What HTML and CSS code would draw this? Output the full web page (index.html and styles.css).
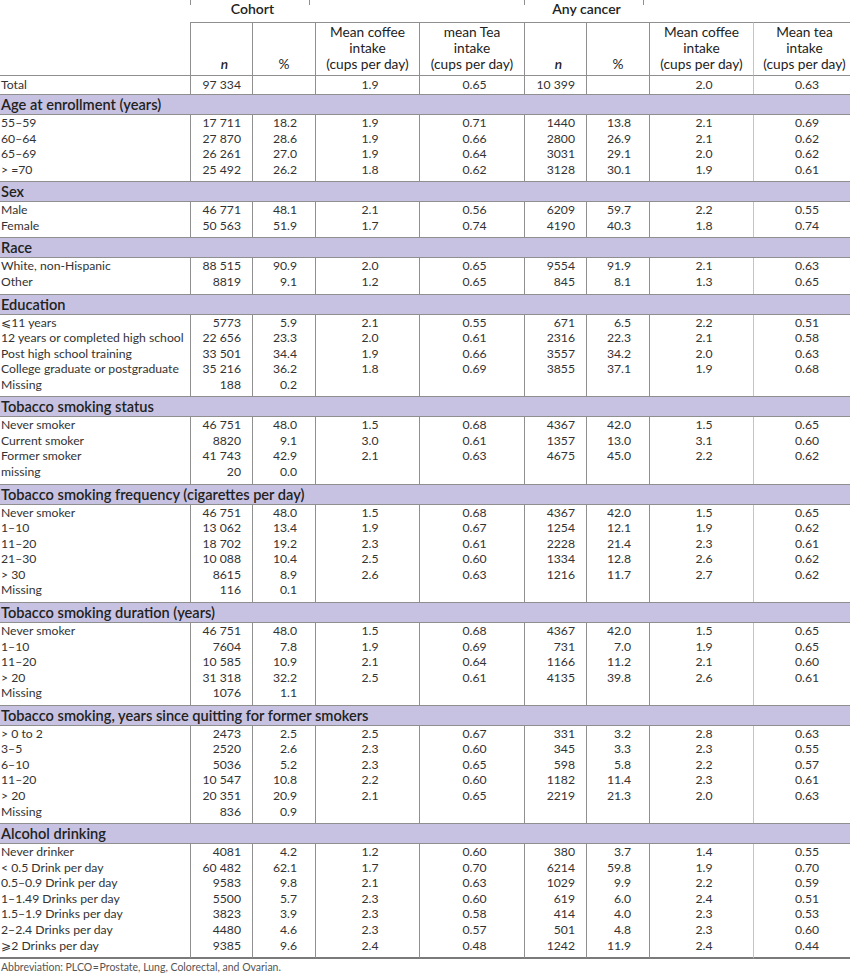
FILE: index.html
```html
<!DOCTYPE html>
<html>
<head>
<meta charset="utf-8">
<link rel="stylesheet" href="styles.css">
</head>
<body>
<table class="t">
<colgroup>
<col class="c-lab"><col class="c-n"><col class="c-p"><col class="c-m"><col class="c-m2"><col class="c-n"><col class="c-p"><col class="c-m"><col class="c-last">
</colgroup>
<tr class="grp">
<td></td><td colspan="2" class="g">Cohort</td><td colspan="2"></td><td colspan="2" class="g">Any cancer</td><td colspan="2"></td>
</tr>
<tr class="hd">
<td class="lab"></td><td class="v"><i>n</i></td><td class="v">%</td><td class="v">Mean coffee<br>intake<br>(cups per day)</td><td class="v">mean Tea<br>intake<br>(cups per day)</td><td class="v"><i>n</i></td><td class="v">%</td><td class="v">Mean coffee<br>intake<br>(cups per day)</td><td class="v lt">Mean tea<br>intake<br>(cups per day)</td>
</tr>
<tr class="tot">
<td class="lab">Total</td><td class="n">97&nbsp;334</td><td class="p"></td><td class="m">1.9</td><td class="m">0.65</td><td class="n">10&nbsp;399</td><td class="p"></td><td class="m">2.0</td><td class="m lt">0.63</td>
</tr>
<tr class="band"><td colspan="9">Age at enrollment (years)</td></tr>
<tr><td class="lab">55–59</td><td class="n">17&nbsp;711</td><td class="p">18.2</td><td class="m">1.9</td><td class="m">0.71</td><td class="n">1440</td><td class="p">13.8</td><td class="m">2.1</td><td class="m lt">0.69</td></tr>
<tr><td class="lab">60–64</td><td class="n">27&nbsp;870</td><td class="p">28.6</td><td class="m">1.9</td><td class="m">0.66</td><td class="n">2800</td><td class="p">26.9</td><td class="m">2.1</td><td class="m lt">0.62</td></tr>
<tr><td class="lab">65–69</td><td class="n">26&nbsp;261</td><td class="p">27.0</td><td class="m">1.9</td><td class="m">0.64</td><td class="n">3031</td><td class="p">29.1</td><td class="m">2.0</td><td class="m lt">0.62</td></tr>
<tr class="last"><td class="lab">&gt;&nbsp;=70</td><td class="n">25&nbsp;492</td><td class="p">26.2</td><td class="m">1.8</td><td class="m">0.62</td><td class="n">3128</td><td class="p">30.1</td><td class="m">1.9</td><td class="m lt">0.61</td></tr>
<tr class="band"><td colspan="9">Sex</td></tr>
<tr><td class="lab">Male</td><td class="n">46&nbsp;771</td><td class="p">48.1</td><td class="m">2.1</td><td class="m">0.56</td><td class="n">6209</td><td class="p">59.7</td><td class="m">2.2</td><td class="m lt">0.55</td></tr>
<tr class="last"><td class="lab">Female</td><td class="n">50&nbsp;563</td><td class="p">51.9</td><td class="m">1.7</td><td class="m">0.74</td><td class="n">4190</td><td class="p">40.3</td><td class="m">1.8</td><td class="m lt">0.74</td></tr>
<tr class="band"><td colspan="9">Race</td></tr>
<tr><td class="lab">White, non-Hispanic</td><td class="n">88&nbsp;515</td><td class="p">90.9</td><td class="m">2.0</td><td class="m">0.65</td><td class="n">9554</td><td class="p">91.9</td><td class="m">2.1</td><td class="m lt">0.63</td></tr>
<tr class="last"><td class="lab">Other</td><td class="n">8819</td><td class="p">9.1</td><td class="m">1.2</td><td class="m">0.65</td><td class="n">845</td><td class="p">8.1</td><td class="m">1.3</td><td class="m lt">0.65</td></tr>
<tr class="band"><td colspan="9">Education</td></tr>
<tr><td class="lab">⩽11 years</td><td class="n">5773</td><td class="p">5.9</td><td class="m">2.1</td><td class="m">0.55</td><td class="n">671</td><td class="p">6.5</td><td class="m">2.2</td><td class="m lt">0.51</td></tr>
<tr><td class="lab">12 years or completed high school</td><td class="n">22&nbsp;656</td><td class="p">23.3</td><td class="m">2.0</td><td class="m">0.61</td><td class="n">2316</td><td class="p">22.3</td><td class="m">2.1</td><td class="m lt">0.58</td></tr>
<tr><td class="lab">Post high school training</td><td class="n">33&nbsp;501</td><td class="p">34.4</td><td class="m">1.9</td><td class="m">0.66</td><td class="n">3557</td><td class="p">34.2</td><td class="m">2.0</td><td class="m lt">0.63</td></tr>
<tr><td class="lab">College graduate or postgraduate</td><td class="n">35&nbsp;216</td><td class="p">36.2</td><td class="m">1.8</td><td class="m">0.69</td><td class="n">3855</td><td class="p">37.1</td><td class="m">1.9</td><td class="m lt">0.68</td></tr>
<tr class="last"><td class="lab">Missing</td><td class="n">188</td><td class="p">0.2</td><td class="m"></td><td class="m"></td><td class="n"></td><td class="p"></td><td class="m"></td><td class="m lt"></td></tr>
<tr class="band"><td colspan="9">Tobacco smoking status</td></tr>
<tr><td class="lab">Never smoker</td><td class="n">46&nbsp;751</td><td class="p">48.0</td><td class="m">1.5</td><td class="m">0.68</td><td class="n">4367</td><td class="p">42.0</td><td class="m">1.5</td><td class="m lt">0.65</td></tr>
<tr><td class="lab">Current smoker</td><td class="n">8820</td><td class="p">9.1</td><td class="m">3.0</td><td class="m">0.61</td><td class="n">1357</td><td class="p">13.0</td><td class="m">3.1</td><td class="m lt">0.60</td></tr>
<tr><td class="lab">Former smoker</td><td class="n">41&nbsp;743</td><td class="p">42.9</td><td class="m">2.1</td><td class="m">0.63</td><td class="n">4675</td><td class="p">45.0</td><td class="m">2.2</td><td class="m lt">0.62</td></tr>
<tr class="last"><td class="lab">missing</td><td class="n">20</td><td class="p">0.0</td><td class="m"></td><td class="m"></td><td class="n"></td><td class="p"></td><td class="m"></td><td class="m lt"></td></tr>
<tr class="band"><td colspan="9">Tobacco smoking frequency (cigarettes per day)</td></tr>
<tr><td class="lab">Never smoker</td><td class="n">46&nbsp;751</td><td class="p">48.0</td><td class="m">1.5</td><td class="m">0.68</td><td class="n">4367</td><td class="p">42.0</td><td class="m">1.5</td><td class="m lt">0.65</td></tr>
<tr><td class="lab">1–10</td><td class="n">13&nbsp;062</td><td class="p">13.4</td><td class="m">1.9</td><td class="m">0.67</td><td class="n">1254</td><td class="p">12.1</td><td class="m">1.9</td><td class="m lt">0.62</td></tr>
<tr><td class="lab">11–20</td><td class="n">18&nbsp;702</td><td class="p">19.2</td><td class="m">2.3</td><td class="m">0.61</td><td class="n">2228</td><td class="p">21.4</td><td class="m">2.3</td><td class="m lt">0.61</td></tr>
<tr><td class="lab">21–30</td><td class="n">10&nbsp;088</td><td class="p">10.4</td><td class="m">2.5</td><td class="m">0.60</td><td class="n">1334</td><td class="p">12.8</td><td class="m">2.6</td><td class="m lt">0.62</td></tr>
<tr><td class="lab">&gt;&nbsp;30</td><td class="n">8615</td><td class="p">8.9</td><td class="m">2.6</td><td class="m">0.63</td><td class="n">1216</td><td class="p">11.7</td><td class="m">2.7</td><td class="m lt">0.62</td></tr>
<tr class="last"><td class="lab">Missing</td><td class="n">116</td><td class="p">0.1</td><td class="m"></td><td class="m"></td><td class="n"></td><td class="p"></td><td class="m"></td><td class="m lt"></td></tr>
<tr class="band"><td colspan="9">Tobacco smoking duration (years)</td></tr>
<tr><td class="lab">Never smoker</td><td class="n">46&nbsp;751</td><td class="p">48.0</td><td class="m">1.5</td><td class="m">0.68</td><td class="n">4367</td><td class="p">42.0</td><td class="m">1.5</td><td class="m lt">0.65</td></tr>
<tr><td class="lab">1–10</td><td class="n">7604</td><td class="p">7.8</td><td class="m">1.9</td><td class="m">0.69</td><td class="n">731</td><td class="p">7.0</td><td class="m">1.9</td><td class="m lt">0.65</td></tr>
<tr><td class="lab">11–20</td><td class="n">10&nbsp;585</td><td class="p">10.9</td><td class="m">2.1</td><td class="m">0.64</td><td class="n">1166</td><td class="p">11.2</td><td class="m">2.1</td><td class="m lt">0.60</td></tr>
<tr><td class="lab">&gt;&nbsp;20</td><td class="n">31&nbsp;318</td><td class="p">32.2</td><td class="m">2.5</td><td class="m">0.61</td><td class="n">4135</td><td class="p">39.8</td><td class="m">2.6</td><td class="m lt">0.61</td></tr>
<tr class="last"><td class="lab">Missing</td><td class="n">1076</td><td class="p">1.1</td><td class="m"></td><td class="m"></td><td class="n"></td><td class="p"></td><td class="m"></td><td class="m lt"></td></tr>
<tr class="band"><td colspan="9">Tobacco smoking, years since quitting for former smokers</td></tr>
<tr><td class="lab">&gt;&nbsp;0 to 2</td><td class="n">2473</td><td class="p">2.5</td><td class="m">2.5</td><td class="m">0.67</td><td class="n">331</td><td class="p">3.2</td><td class="m">2.8</td><td class="m lt">0.63</td></tr>
<tr><td class="lab">3–5</td><td class="n">2520</td><td class="p">2.6</td><td class="m">2.3</td><td class="m">0.60</td><td class="n">345</td><td class="p">3.3</td><td class="m">2.3</td><td class="m lt">0.55</td></tr>
<tr><td class="lab">6–10</td><td class="n">5036</td><td class="p">5.2</td><td class="m">2.3</td><td class="m">0.65</td><td class="n">598</td><td class="p">5.8</td><td class="m">2.2</td><td class="m lt">0.57</td></tr>
<tr><td class="lab">11–20</td><td class="n">10&nbsp;547</td><td class="p">10.8</td><td class="m">2.2</td><td class="m">0.60</td><td class="n">1182</td><td class="p">11.4</td><td class="m">2.3</td><td class="m lt">0.61</td></tr>
<tr><td class="lab">&gt;&nbsp;20</td><td class="n">20&nbsp;351</td><td class="p">20.9</td><td class="m">2.1</td><td class="m">0.65</td><td class="n">2219</td><td class="p">21.3</td><td class="m">2.0</td><td class="m lt">0.63</td></tr>
<tr class="last"><td class="lab">Missing</td><td class="n">836</td><td class="p">0.9</td><td class="m"></td><td class="m"></td><td class="n"></td><td class="p"></td><td class="m"></td><td class="m lt"></td></tr>
<tr class="band"><td colspan="9">Alcohol drinking</td></tr>
<tr><td class="lab">Never drinker</td><td class="n">4081</td><td class="p">4.2</td><td class="m">1.2</td><td class="m">0.60</td><td class="n">380</td><td class="p">3.7</td><td class="m">1.4</td><td class="m lt">0.55</td></tr>
<tr><td class="lab">&lt;&nbsp;0.5 Drink per day</td><td class="n">60&nbsp;482</td><td class="p">62.1</td><td class="m">1.7</td><td class="m">0.70</td><td class="n">6214</td><td class="p">59.8</td><td class="m">1.9</td><td class="m lt">0.70</td></tr>
<tr><td class="lab">0.5–0.9 Drink per day</td><td class="n">9583</td><td class="p">9.8</td><td class="m">2.1</td><td class="m">0.63</td><td class="n">1029</td><td class="p">9.9</td><td class="m">2.2</td><td class="m lt">0.59</td></tr>
<tr><td class="lab">1–1.49 Drinks per day</td><td class="n">5500</td><td class="p">5.7</td><td class="m">2.3</td><td class="m">0.60</td><td class="n">619</td><td class="p">6.0</td><td class="m">2.4</td><td class="m lt">0.51</td></tr>
<tr><td class="lab">1.5–1.9 Drinks per day</td><td class="n">3823</td><td class="p">3.9</td><td class="m">2.3</td><td class="m">0.58</td><td class="n">414</td><td class="p">4.0</td><td class="m">2.3</td><td class="m lt">0.53</td></tr>
<tr><td class="lab">2–2.4 Drinks per day</td><td class="n">4480</td><td class="p">4.6</td><td class="m">2.3</td><td class="m">0.57</td><td class="n">501</td><td class="p">4.8</td><td class="m">2.3</td><td class="m lt">0.60</td></tr>
<tr class="last end"><td class="lab">⩾2 Drinks per day</td><td class="n">9385</td><td class="p">9.6</td><td class="m">2.4</td><td class="m">0.48</td><td class="n">1242</td><td class="p">11.9</td><td class="m">2.4</td><td class="m lt">0.44</td></tr>
</table>
<p class="note">Abbreviation: PLCO&#8202;=&#8202;Prostate, Lung, Colorectal, and Ovarian.</p>
</body>
</html>
```
FILE: styles.css
```css
html, body {
  margin: 0;
  padding: 0;
  overflow: hidden;
  background: #fff;
}
body {
  font-family: Lato, "Noto Sans", "DejaVu Sans", sans-serif;
  color: #333;
  width: 855px;
}
.t {
  border-collapse: separate;
  border-spacing: 0;
  table-layout: fixed;
  width: 855px;
  font-size: 12.2px;
}
.c-lab { width: 190px; }
.c-n { width: 62px; }
.c-p { width: 63px; }
.c-m { width: 104px; }
.c-m2 { width: 105px; }
.c-last { width: 102px; }

.t td {
  padding: 0;
  line-height: 15.56px;
  white-space: nowrap;
  overflow: hidden;
}
.t td + td {
  border-left: 1px solid #8f8f8f;
}
.t td.lt {
  border-left-color: #c4c4c4;
}

/* group header row */
.t .grp td {
  height: 22px;
  vertical-align: top;
  border-left: none;
  overflow: visible;
  font-weight: 600;
  font-size: 14px;
  line-height: 17px;
  color: #222;
  text-align: center;
}
.t .grp td.g {
  background:
    linear-gradient(#8f8f8f, #8f8f8f) left top / 1px 5px no-repeat,
    linear-gradient(#8f8f8f, #8f8f8f) calc(100% - 5px) top / 1px 5px no-repeat;
}

/* column header row */
.hd td {
  vertical-align: bottom;
  text-align: center;
  font-size: 13.7px;
  color: #222;
  height: 48px;
  border-top: 1px solid #8f8f8f;
}
.t .hd td {
  line-height: 16px;
  padding: 1px 0 3px;
}
.t .hd td.lab {
  border-top: none;
}
.hd i {
  font-weight: 600;
  padding-left: 6px;
}

/* total row */
.t .tot td {
  border-top: 1px solid #8f8f8f;
  padding-top: 1px;
  padding-bottom: 1.5px;
  line-height: 15.5px;
}

/* band rows */
.t .band td {
  background: #c7c2e1;
  border-top: 1px solid #8f8f8f;
  border-bottom: 1px solid #8f8f8f;
  font-weight: 600;
  font-size: 14.6px;
  line-height: 19px;
  color: #222;
  padding: 0 0 0 1px;
}

.t td.lab {
  padding-left: 1px;
  text-align: left;
}
.t td.n {
  text-align: right;
  padding-right: 11px;
}
.t td.p {
  text-align: right;
  padding-right: 18px;
}
.t td.m {
  text-align: center;
  padding-left: 5px;
}

.t .last td {
  padding-bottom: 4px;
}
.t .end td {
  border-bottom: 2px solid #7a7a7a;
}

.note {
  margin: 2px 0 0;
  font-size: 10.5px;
  line-height: 12px;
  color: #555;
  padding-left: 1px;
}
```
